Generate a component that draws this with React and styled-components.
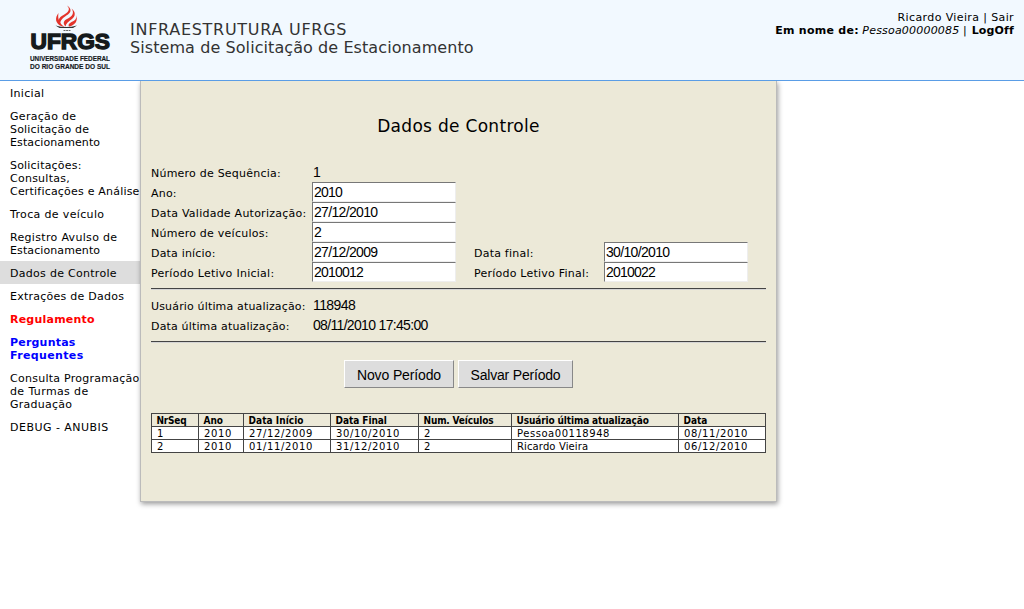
import React from 'react';
import styled, { createGlobalStyle } from 'styled-components';

const GlobalStyle = createGlobalStyle`
  * { box-sizing: border-box; }
  body {
    margin: 0;
    min-height: 100vh;
    background: #fff;
    color: #000;
    font: 11px/13px "DejaVu Sans", Verdana, sans-serif;
  }
`;

const T = styled.span`
  white-space: nowrap;
  letter-spacing: ${p => p.$ls || 0}px;
  font-weight: ${p => (p.$bold ? 'bold' : 'inherit')};
  font-style: ${p => (p.$italic ? 'italic' : 'inherit')};
`;

const Header = styled.header`
  position: relative;
  z-index: 1;
  display: flex;
  height: 81px;
  background: #f2f9ff;
  border-bottom: 1px solid #5a9de6;
`;
const Logo = styled.svg`
  display: block;
  flex: none;
  width: 130px;
  height: 80px;
`;
const Titles = styled.div`
  flex: 1;
  padding-top: 21px;
  font-size: 16px;
  line-height: 18px;
  color: #333;
`;
const TitleLine = styled.div`white-space: nowrap;`;
const Account = styled.div`
  padding: 11px 10px 0 0;
  text-align: right;
`;
const AccountLine = styled.div`white-space: pre;`;

const Body = styled.div`
  display: flex;
  align-items: flex-start;
  min-height: calc(100vh - 81px);
`;
const Sidebar = styled.nav`width: 140px; flex: none;`;
const Item = styled.a`
  display: flex;
  flex-direction: column;
  padding: 6px 0 4px 10px;
  color: ${p => p.$color || '#000'};
  background: ${p => (p.$active ? '#ddd' : 'transparent')};
`;

const Panel = styled.main`
  width: 637px;
  height: 421px;
  padding: 34px 10px 0;
  background: #ece9d8;
  border: 1px solid #bbb;
  border-top: 0;
  box-shadow: 1px 2px 5px rgba(0, 0, 0, 0.4);
`;
const Heading = styled.h1`
  margin: 0 0 25px;
  text-align: center;
  font-size: 17px;
  line-height: 22px;
  font-weight: normal;
`;
const Form = styled.div`
  display: grid;
  grid-template-columns: 161px 162px 130px 144px;
  grid-auto-rows: 20px;
`;
const Label = styled.label`line-height: 24px; white-space: nowrap;`;
const Value = styled.span`
  font: 14px/20px "Liberation Sans", Arial, sans-serif;
  padding-left: 1px;
  white-space: nowrap;
`;
const Field = styled.input`
  width: 144px;
  height: 20px;
  padding: 0 1px;
  border: 1px solid;
  border-color: #777 #eee #eee #777;
  border-radius: 0;
  outline: 0;
  background: #fff;
  color: #000;
  font: 14px/18px "Liberation Sans", Arial, sans-serif;
  letter-spacing: ${p => p.$ls}px;
`;
const Rule = styled.hr`
  height: 2px;
  margin: ${p => p.$margin};
  border: 0;
  border-top: 1px solid #444;
  border-bottom: 1px solid #d4d4d4;
`;
const Actions = styled.div`
  display: flex;
  justify-content: center;
  gap: 4px;
  margin-bottom: 25px;
`;
const Button = styled.button`
  width: ${p => p.$width}px;
  height: 28px;
  padding: 2px 0 0;
  border: 1px solid;
  border-color: #fff #888 #888 #fff;
  border-radius: 0;
  background: #ddd;
  color: #000;
  font: 14px/20px "Liberation Sans", Arial, sans-serif;
  white-space: nowrap;
`;

const Table = styled.table`
  width: 615px;
  table-layout: fixed;
  border-collapse: collapse;
  font-size: 10px;
  line-height: 11px;
`;
const Th = styled.th`
  height: 13px;
  padding: 1px 0 0 4.5px;
  border: 1px solid #444;
  text-align: left;
  font: bold 10px/11px "DejaVu Sans Condensed", Tahoma, sans-serif;
`;
const Td = styled.td`
  height: 13px;
  padding: 1px 0 0 5px;
  border: 1px solid #444;
  background: #fff;
`;

const MENU = [
  { lines: [['Inicial', 0.3]] },
  { lines: [['Geração de', 0.3], ['Solicitação de', 0.17], ['Estacionamento', 0.1]] },
  { lines: [['Solicitações:', 0.2], ['Consultas,', 0.25], ['Certificações e Análise', 0.2]] },
  { lines: [['Troca de veículo', 0.35]] },
  { lines: [['Registro Avulso de', 0.32], ['Estacionamento', 0.1]] },
  { lines: [['Dados de Controle', 0.29]], active: true },
  { lines: [['Extrações de Dados', 0.25]] },
  { lines: [['Regulamento', 0.22]], color: '#f00', bold: true },
  { lines: [['Perguntas', 0.2], ['Frequentes', 0.36]], color: '#00f', bold: true },
  { lines: [['Consulta Programação', 0.26], ['de Turmas de', 0.38], ['Graduação', 0.25]] },
  { lines: [['DEBUG - ANUBIS', 0.48]] },
];

const COLUMNS = [
  ['NrSeq', 47, -0.2], ['Ano', 45, 0], ['Data Início', 87, 0.05], ['Data Final', 88, -0.05],
  ['Num. Veículos', 93, -0.15], ['Usuário última atualização', 167, -0.12], ['Data', 87, 0],
];
const ROWS = [
  [['1', 0], ['2010', 0.6], ['27/12/2009', 0.65], ['30/10/2010', 0.65], ['2', 0], ['Pessoa00118948', 0.54], ['08/11/2010', 0.65]],
  [['2', 0], ['2010', 0.6], ['01/11/2010', 0.65], ['31/12/2010', 0.65], ['2', 0], ['Ricardo Vieira', 0.12], ['06/12/2010', 0.65]],
];

function UfrgsLogo() {
  return (
    <Logo viewBox="0 0 130 80">
      <g fill="#e3342b">
        <path d="M67 5.5C71 9.5 68 12.500 63.500 15C58.500 17.500 57 21 60.500 24.500C59.500 20 63.500 17.500 68 14.500C72 11.500 71 8 67 5.500Z" />
        <path d="M71.500 8.500C74.500 13 72.500 16 68 18.500C63.500 20.500 62.500 23 65.500 26.500C66 23.500 68 22 72 19C76 16 75.500 11.500 71.500 8.500Z" />
        <path d="M76 14.500C77.500 18.500 74.500 21 71.500 22C68.500 23.500 68 25 69 26.500C75 25.500 78.500 20.500 76 14.500Z" />
        <path d="M58.500 13C54.500 18 55.500 23.500 61 26L64.500 27C59 23 57.500 18.500 58.500 13Z" />
      </g>
      <path d="M55.500 25.500Q66 28.500 77 25.500L73 28H59.500Z" fill="#333" />
      <path d="M63.500 30.500H70.500" stroke="#666" strokeWidth="1" strokeDasharray="2 .6" />
      <g fill="#151a1c" stroke="#151a1c" fontFamily="Liberation Sans, Arial, sans-serif" fontWeight="bold">
        <text x="30.500" y="48.700" fontSize="22" strokeWidth="1.4" textLength="79.500" lengthAdjust="spacingAndGlyphs">UFRGS</text>
        <text x="30" y="61.300" fontSize="6.800" strokeWidth=".15" textLength="80" lengthAdjust="spacingAndGlyphs">UNIVERSIDADE FEDERAL</text>
        <text x="30" y="68.500" fontSize="6.800" strokeWidth=".15" textLength="80" lengthAdjust="spacingAndGlyphs">DO RIO GRANDE DO SUL</text>
      </g>
    </Logo>
  );
}

export default function App() {
  return (
    <>
      <GlobalStyle />
      <Header>
        <UfrgsLogo />
        <Titles>
          <TitleLine><T $ls={0.72}>INFRAESTRUTURA UFRGS</T></TitleLine>
          <TitleLine><T $ls={0.08}>Sistema de Solicitação de Estacionamento</T></TitleLine>
        </Titles>
        <Account>
          <AccountLine><T $ls={0.38}>Ricardo Vieira | Sair</T></AccountLine>
          <AccountLine>
            <T $bold $ls={0.26}>Em nome de:</T> <T $italic $ls={0.2}>Pessoa00000085</T>{' '}
            <T $ls={1.5}>|</T> <T $bold $ls={0.16}>LogOff</T>
          </AccountLine>
        </Account>
      </Header>
      <Body>
        <Sidebar>
          {MENU.map((m, i) => (
            <Item key={i} $color={m.color} $active={m.active}>
              {m.lines.map(([t, ls]) => <T key={t} $ls={ls} $bold={m.bold}>{t}</T>)}
            </Item>
          ))}
        </Sidebar>
        <Panel>
          <Heading><T $ls={0.3}>Dados de Controle</T></Heading>
          <Form>
            <Label><T $ls={0.22}>Número de Sequência:</T></Label><Value>1</Value><i /><i />
            <Label><T $ls={0.2}>Ano:</T></Label><Field defaultValue="2010" $ls={-0.8} /><i /><i />
            <Label><T $ls={0.24}>Data Validade Autorização:</T></Label><Field defaultValue="27/12/2010" $ls={-0.67} /><i /><i />
            <Label><T $ls={0.24}>Número de veículos:</T></Label><Field defaultValue="2" $ls={0} /><i /><i />
            <Label><T $ls={0.18}>Data início:</T></Label><Field defaultValue="27/12/2009" $ls={-0.67} />
            <Label><T $ls={0.22}>Data final:</T></Label><Field defaultValue="30/10/2010" $ls={-0.67} />
            <Label><T $ls={0.27}>Período Letivo Inicial:</T></Label><Field defaultValue="2010012" $ls={-0.8} />
            <Label><T $ls={0.23}>Período Letivo Final:</T></Label><Field defaultValue="2010022" $ls={-0.8} />
          </Form>
          <Rule $margin="6px 0 5px" />
          <Form>
            <Label><T $ls={0.16}>Usuário última atualização:</T></Label><Value><T $ls={-0.6}>118948</T></Value><i /><i />
            <Label><T $ls={0.16}>Data última atualização:</T></Label><Value><T $ls={-0.67}>08/11/2010 17:45:00</T></Value>
          </Form>
          <Rule $margin="6px 0 17px" />
          <Actions>
            <Button $width={110}><T $ls={-0.13}>Novo Período</T></Button>
            <Button $width={115}><T $ls={-0.19}>Salvar Período</T></Button>
          </Actions>
          <Table>
            <colgroup>{COLUMNS.map(([t, w]) => <col key={t} width={w} />)}</colgroup>
            <thead>
              <tr>{COLUMNS.map(([t, , ls]) => <Th key={t}><T $ls={ls}>{t}</T></Th>)}</tr>
            </thead>
            <tbody>
              {ROWS.map((r, i) => (
                <tr key={i}>{r.map(([t, ls], j) => <Td key={j}><T $ls={ls}>{t}</T></Td>)}</tr>
              ))}
            </tbody>
          </Table>
        </Panel>
      </Body>
    </>
  );
}
